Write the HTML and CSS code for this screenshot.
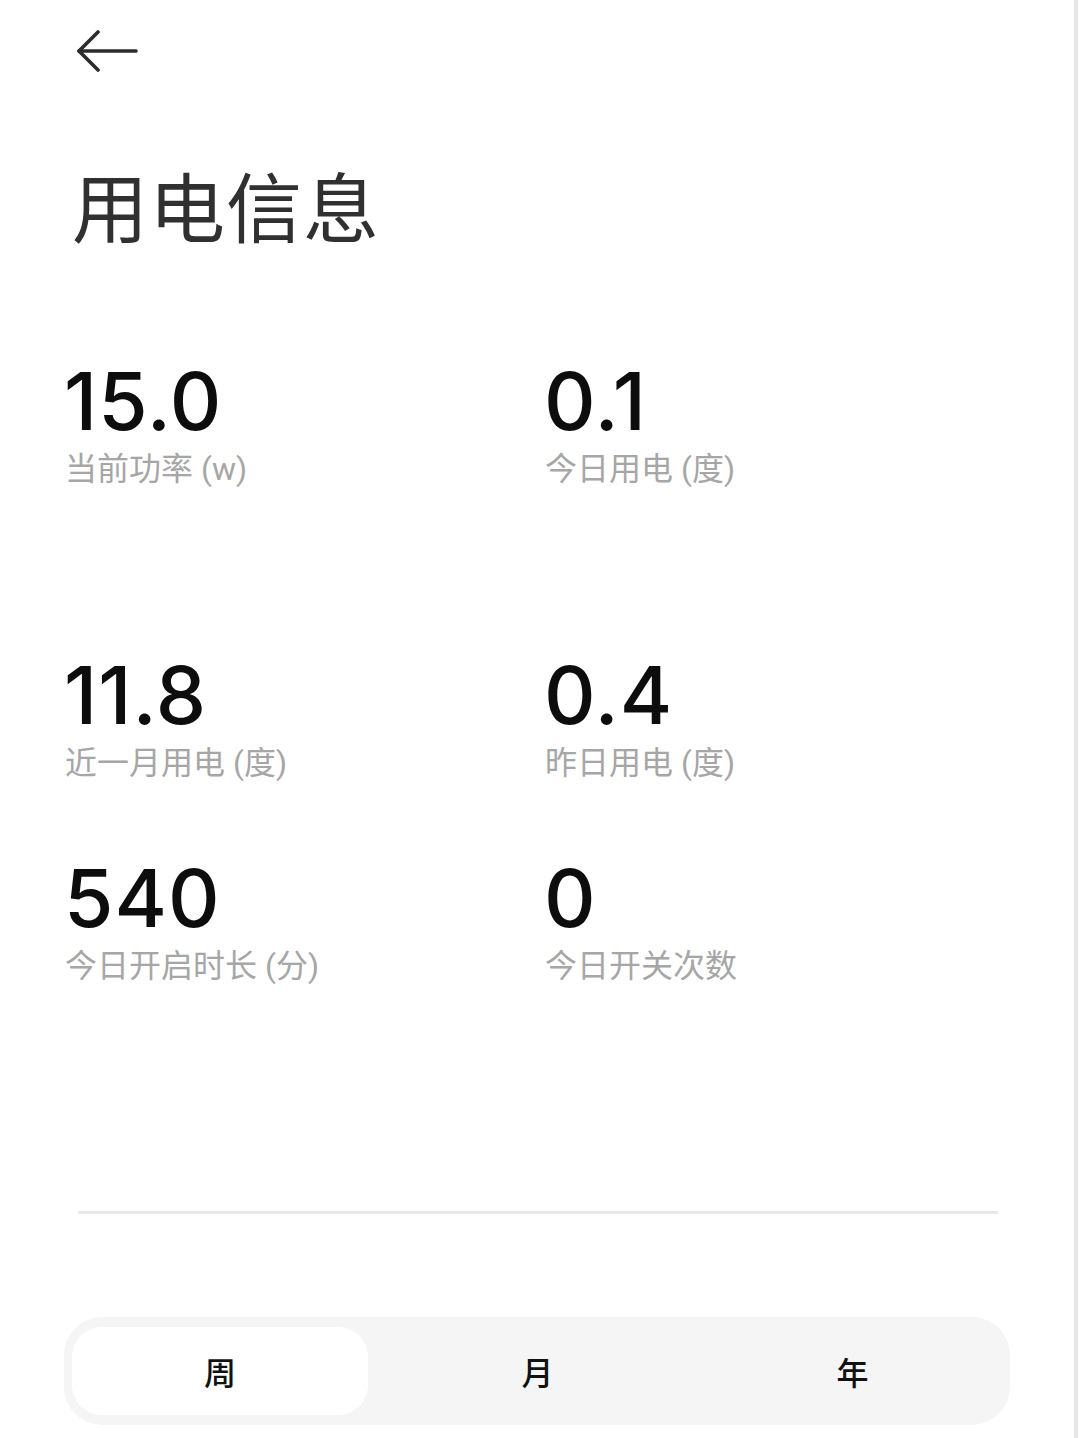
FILE: index.html
```html
<!DOCTYPE html>
<html lang="zh-CN">
<head>
<meta charset="utf-8">
<title>用电信息</title>
<link rel="stylesheet" href="styles.css">
</head>
<body>
<div class="page">
  <header class="topbar">
    <svg class="back" width="62" height="44" viewBox="0 0 62 44" fill="none" stroke="#2b2b2b" stroke-width="3.6" stroke-linecap="round" stroke-linejoin="round">
      <path d="M60 21 H3"/>
      <path d="M22 2 L3 21 L22 40"/>
    </svg>
  </header>
  <h1 class="title">用电信息</h1>

  <section class="stats">
    <div class="stat">
      <div class="num">15.0</div>
      <div class="label">当前功率 (w)</div>
    </div>
    <div class="stat">
      <div class="num">0.1</div>
      <div class="label">今日用电 (度)</div>
    </div>
    <div class="stat row2">
      <div class="num">11.8</div>
      <div class="label">近一月用电 (度)</div>
    </div>
    <div class="stat row2">
      <div class="num">0.4</div>
      <div class="label">昨日用电 (度)</div>
    </div>
    <div class="stat row3">
      <div class="num">540</div>
      <div class="label">今日开启时长 (分)</div>
    </div>
    <div class="stat row3">
      <div class="num">0</div>
      <div class="label">今日开关次数</div>
    </div>
  </section>

  <div class="divider"></div>

  <nav class="tabs">
    <div class="tab active">周</div>
    <div class="tab second">月</div>
    <div class="tab third">年</div>
  </nav>
</div>
</body>
</html>
```

FILE: styles.css
```css
html, body {
  margin: 0;
  padding: 0;
  background: #ffffff;
}

body {
  font-family: "Noto Sans CJK SC", "Noto Sans", sans-serif;
  color: #111;
}

.page {
  box-sizing: border-box;
  width: 1078px;
  height: 1438px;
  border-right: 4px solid #e6e6e6;
  overflow: hidden;
}

.topbar {
  padding: 30px 0 0 76px;
  height: 44px;
}

.back {
  display: block;
}

.title {
  margin: 92px 0 0 72px;
  font-size: 76px;
  line-height: 1;
  font-weight: 400;
  color: #303030;
  letter-spacing: 1px;
}

.stats {
  margin-top: 119px;
  padding-left: 62px;
  display: grid;
  grid-template-columns: 480px 1fr;
}

.stat {
  display: flex;
  flex-direction: column;
}

.stat.row2 {
  margin-top: 170px;
}

.stat.row3 {
  margin-top: 79px;
}

.num {
  padding-left: 2px;
  font-family: "Inter", "Roboto", "Liberation Sans", sans-serif;
  font-size: 80px;
  line-height: 1;
  font-weight: 500;
  color: #0d0d0d;
  letter-spacing: 1px;
}

.label {
  margin-top: 12px;
  padding-left: 3px;
  font-size: 32px;
  line-height: 1;
  color: #a6a6a6;
  font-family: "Roboto", "Noto Sans CJK SC", sans-serif;
}

.divider {
  margin: 229px 0 0 78px;
  width: 920px;
  height: 3px;
  background: #e8e8e8;
}

.tabs {
  margin: 103px 0 0 64px;
  width: 946px;
  height: 108px;
  box-sizing: border-box;
  padding: 10px 8px;
  background: #f5f5f5;
  border-radius: 38px;
  display: grid;
  grid-template-columns: 296px 1fr 1fr;
}

.tab {
  display: flex;
  align-items: center;
  justify-content: center;
  font-size: 32px;
  font-weight: 500;
  color: #111;
  border-radius: 30px;
}

.tab.second {
  padding-left: 22px;
}

.tab.third {
  padding-left: 18px;
}

.tab.active {
  background: #ffffff;
}
```
